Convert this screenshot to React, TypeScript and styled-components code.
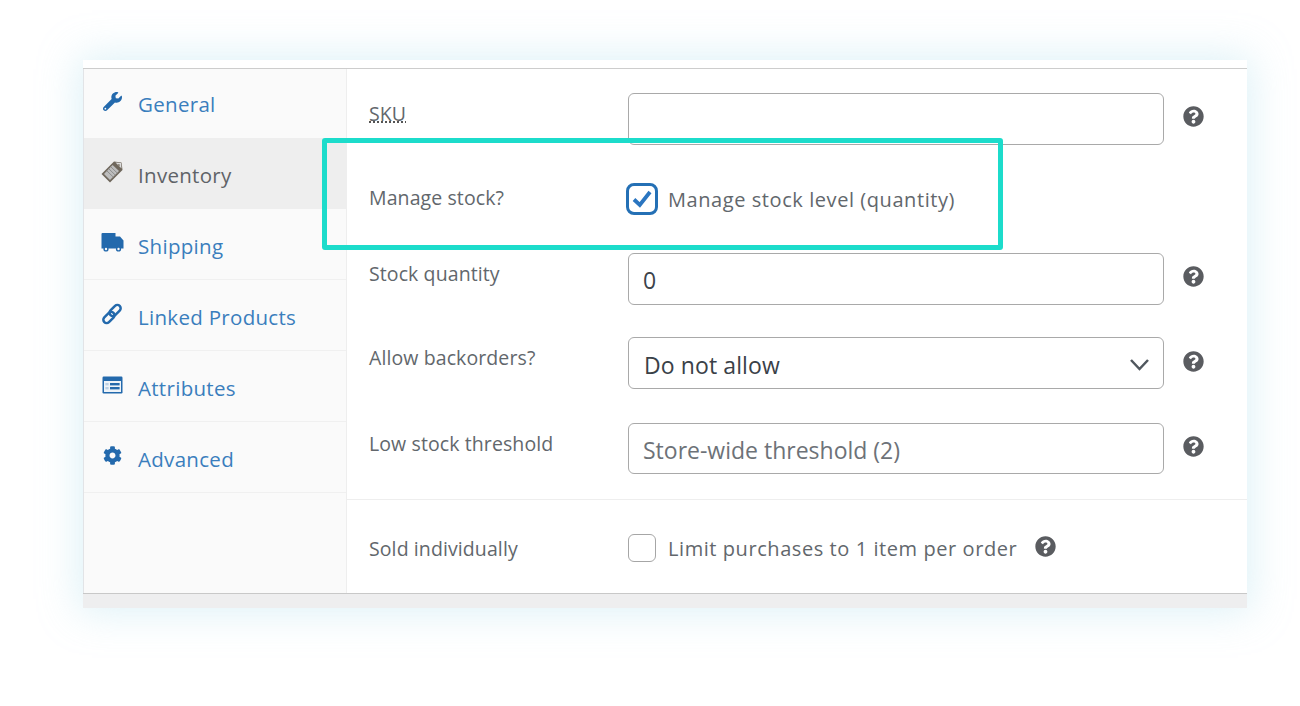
import React from "react";
import styled, { createGlobalStyle } from "styled-components";
import { FaWrench, FaCog, FaQuestionCircle } from "react-icons/fa";

const Global = createGlobalStyle`
  html, body { margin: 0; padding: 0; background: #fff; }
  body { font-family: "Open Sans", "Noto Sans", sans-serif; overflow: hidden; }
`;

const Page = styled.div`
  width: 1300px;
  height: 706px;
  padding: 60px 53px 0 83px;
  box-sizing: border-box;
  background: #fff;
`;

const Panel = styled.section`
  position: relative;
  width: 1164px;
  height: 548px;
  display: flex;
  flex-direction: column;
  background: #fff;
  box-shadow: 0 0 38px 4px rgba(165, 218, 235, 0.38);
`;

const Body = styled.div`
  display: flex;
  height: 524px;
  margin-top: 8px;
  border-top: 1px solid #cdcdcd;
  border-bottom: 1px solid #c8c8c8;
  box-sizing: content-box;
`;

const Footer = styled.div`
  flex: 1;
  background: #eeeeef;
`;

const Sidebar = styled.nav`
  width: 262px;
  flex: none;
  background: #fafafa;
  border-left: 1px solid #e2e4e7;
  border-right: 1px solid #eeeeee;
`;

const Tab = styled.a<{ $active?: boolean }>`
  display: flex;
  align-items: center;
  height: ${(p) => (p.$active ? "71px" : "70px")};
  padding: 3px 0 0 17px;
  box-sizing: border-box;
  margin-bottom: ${(p) => (p.$active ? "0" : "1px")};
  background: ${(p) => (p.$active ? "#eeeeee" : "transparent")};
  color: ${(p) => (p.$active ? "#5f6368" : "#3a7ebd")};
  box-shadow: ${(p) => (p.$active ? "none" : "0 1px 0 #f0f0f0")};
  font-size: 20.5px;
  letter-spacing: 0.3px;
  &:first-child {
    height: 69px;
    margin-bottom: 0;
    padding-top: 1px;
    box-shadow: none;
  }
`;

const TabIcon = styled.span`
  width: 22px;
  height: 22px;
  margin: -6px 15px 0 0;
  display: flex;
  align-items: center;
  justify-content: center;
  color: #2369ac;
  svg { display: block; flex: none; }
`;

const Main = styled.main`
  flex: 1;
  display: flex;
  flex-direction: column;
  padding-top: 24px;
`;

const Row = styled.div<{ $height: number; $gap?: number }>`
  display: flex;
  align-items: center;
  height: ${(p) => p.$height}px;
  margin-top: ${(p) => p.$gap ?? 0}px;
  flex: none;
  padding-left: 22px;
`;

const Label = styled.label<{ $dotted?: boolean; $shift?: number }>`
  width: 259px;
  flex: none;
  margin-top: ${(p) => p.$shift ?? -11}px;
  color: #62676c;
  font-size: 19.5px;
  letter-spacing: 0.1px;
  span {
    text-decoration: ${(p) => (p.$dotted ? "underline dotted #555" : "none")};
    text-underline-offset: 1px;
  }
`;

const TextInput = styled.input`
  width: 536px;
  height: 100%;
  box-sizing: border-box;
  border: 1.5px solid #a9a9a9;
  border-radius: 6px;
  padding: 2px 14px 0;
  background: #fff;
  color: #3c434a;
  font-family: inherit;
  font-size: 23px;
  outline: none;
  &::placeholder { color: #6d7278; opacity: 1; }
`;

const SelectBox = styled.div`
  position: relative;
  width: 536px;
  height: 100%;
`;

const Select = styled.select`
  width: 100%;
  height: 100%;
  appearance: none;
  box-sizing: border-box;
  border: 1.5px solid #a9a9a9;
  border-radius: 6px;
  padding: 3px 15px 0;
  background: #fff;
  color: #3a4148;
  font-family: inherit;
  font-size: 23px;
  letter-spacing: 0.1px;
`;

const ChevronSvg = styled.svg`
  position: absolute;
  right: 14px;
  top: 21px;
  width: 21px;
  height: 13px;
  pointer-events: none;
`;

const Help = styled(FaQuestionCircle)<{ $inline?: boolean; $down?: number }>`
  width: 21px;
  height: 21px;
  flex: none;
  margin: ${(p) => -6 + (p.$down ?? 0)}px 0 0 ${(p) => (p.$inline ? "18px" : "19px")};
  color: #5a5c60;
`;

const CheckLabel = styled.span`
  margin-left: 12px;
  color: #62676c;
  font-size: 20px;
  letter-spacing: 0.57px;
`;

const Check = styled.span<{ $on?: boolean }>`
  width: ${(p) => (p.$on ? "32px" : "28px")};
  height: ${(p) => (p.$on ? "32px" : "28px")};
  margin-left: ${(p) => (p.$on ? "-2px" : "0")};
  margin-right: ${(p) => (p.$on ? "-2px" : "0")};
  flex: none;
  box-sizing: border-box;
  display: flex;
  align-items: center;
  justify-content: center;
  background: #fff;
  border: ${(p) => (p.$on ? "3.5px solid #2470b5" : "1.5px solid #a6a6a6")};
  border-radius: ${(p) => (p.$on ? "8px" : "6px")};
`;

const CheckField = styled.div<{ $shift?: number }>`
  display: flex;
  align-items: center;
  margin-top: ${(p) => p.$shift ?? 0}px;
`;

const Divider = styled.hr`
  border: 0;
  height: 1px;
  flex: none;
  margin: 25px 0 0;
  background: #eeeeee;
`;

const Highlight = styled.div`
  position: absolute;
  left: 239px;
  top: 78px;
  width: 681px;
  height: 112px;
  box-sizing: border-box;
  border: 5px solid #1cdccb;
  border-radius: 3px;
  pointer-events: none;
`;

const TagIcon = () => (
  <svg width="24" height="24" viewBox="0 0 24 24">
    <path d="M14 1.5 L21.5 2.5 L22.5 10 L10 22.5 L1.5 14 Z" fill="#6f675c" />
    <path d="M12.6 5 L19 11 L10 20 L4 14 Z" fill="#bdbdbd" />
    <path d="M10.8 6.8 L17.2 13 M8.8 8.8 L15.2 15 M6.8 10.8 L13.2 17" stroke="#8f8f8f" strokeWidth="1" />
    <path d="M15.5 2.5 L21 3 L21.5 8.5 Z" fill="#dcdcdc" />
    <circle cx="18.8" cy="5.2" r="1.1" fill="#8a8378" />
  </svg>
);

const TruckIcon = () => (
  <svg width="23" height="20" viewBox="0 0 23 20">
    <path d="M0.5 1 Q0.5 0 1.5 0 H14.5 V3.5 H19 L22.5 7.5 V15.5 H0.5 Z" fill="#2369ac" />
    <circle cx="5" cy="16" r="2.6" fill="#2369ac" />
    <circle cx="17.5" cy="16" r="2.6" fill="#2369ac" />
    <circle cx="5" cy="16" r="1.2" fill="#fafafa" />
    <circle cx="17.5" cy="16" r="1.2" fill="#fafafa" />
  </svg>
);

const LinkIcon = () => (
  <svg width="22" height="22" viewBox="0 0 22 22" fill="none" stroke="#2369ac" strokeWidth="2.5">
    <rect x="10.8" y="1" width="6.6" height="13" rx="3.3" transform="rotate(45 14.1 7.5)" />
    <rect x="4.6" y="8" width="6.6" height="13" rx="3.3" transform="rotate(45 7.9 14.5)" />
  </svg>
);

const AttrIcon = () => (
  <svg width="21" height="18" viewBox="0 0 21 18">
    <rect x="0.5" y="0.5" width="20" height="17" rx="1.2" fill="#2369ac" />
    <rect x="2" y="5" width="17" height="11" fill="#eef3f8" />
    <rect x="3.4" y="7" width="3.2" height="2.4" fill="#b9cfe4" />
    <rect x="3.4" y="11" width="3.2" height="2.4" fill="#b9cfe4" />
    <rect x="8" y="7" width="9.6" height="2.4" fill="#2369ac" />
    <rect x="8" y="11" width="9.6" height="2.4" fill="#2369ac" />
  </svg>
);

const tabs = [
  { name: "General", icon: <FaWrench size={19} /> },
  { name: "Inventory", icon: <TagIcon />, active: true },
  { name: "Shipping", icon: <TruckIcon /> },
  { name: "Linked Products", icon: <LinkIcon /> },
  { name: "Attributes", icon: <AttrIcon /> },
  { name: "Advanced", icon: <FaCog size={19} /> },
];

export default function App() {
  return (
    <Page>
      <Global />
      <Panel>
        <Body>
          <Sidebar>
            {tabs.map((t) => (
              <Tab key={t.name} $active={t.active}>
                <TabIcon>{t.icon}</TabIcon>
                {t.name}
              </Tab>
            ))}
          </Sidebar>
          <Main>
            <Row $height={52}>
              <Label $dotted><span>SKU</span></Label>
              <TextInput readOnly defaultValue="" />
              <Help />
            </Row>
            <Row $height={108}>
              <Label $shift={-3}>Manage stock?</Label>
              <CheckField>
                <Check $on>
                  <svg width="22" height="20" viewBox="0 0 22 20" fill="none" stroke="#2a75c0" strokeWidth="3.8">
                    <path d="M3 10.5 L8.8 16 L19 3" />
                  </svg>
                </Check>
                <CheckLabel>Manage stock level (quantity)</CheckLabel>
              </CheckField>
            </Row>
            <Row $height={52}>
              <Label>Stock quantity</Label>
              <TextInput readOnly defaultValue="0" />
              <Help />
            </Row>
            <Row $height={52} $gap={32}>
              <Label>Allow backorders?</Label>
              <SelectBox>
                <Select defaultValue="no">
                  <option value="no">Do not allow</option>
                </Select>
                <ChevronSvg viewBox="0 0 21 13" fill="none" stroke="#50575e" strokeWidth="2.5">
                  <path d="M2 2 L10.5 11 L19 2" />
                </ChevronSvg>
              </SelectBox>
              <Help $down={2} />
            </Row>
            <Row $height={51} $gap={34}>
              <Label>Low stock threshold</Label>
              <TextInput readOnly placeholder="Store-wide threshold (2)" />
              <Help $down={1} />
            </Row>
            <Divider />
            <Row $height={93}>
              <Label $shift={3}>Sold individually</Label>
              <CheckField $shift={3}>
                <Check />
                <CheckLabel>Limit purchases to 1 item per order</CheckLabel>
                <Help $inline $down={2} />
              </CheckField>
            </Row>
          </Main>
        </Body>
        <Footer />
        <Highlight />
      </Panel>
    </Page>
  );
}
